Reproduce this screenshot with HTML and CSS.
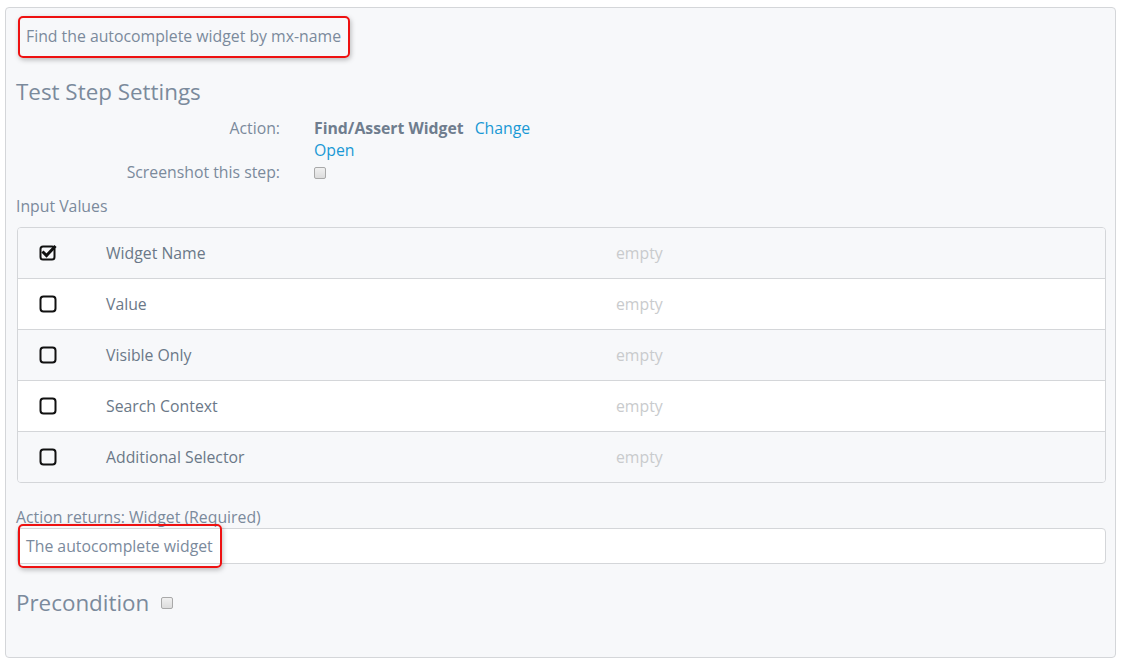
FILE: index.html
```html
<!DOCTYPE html>
<html>
<head>
<meta charset="utf-8">
<link rel="stylesheet" href="styles.css">
</head>
<body>
<div class="panel">
  <div class="note-box">Find the autocomplete widget by mx-name</div>
  <h3 class="heading">Test Step Settings</h3>
  <div class="form-grid">
    <div class="label">Action:</div>
    <div class="value"><span class="strong">Find/Assert Widget</span><a class="link gap">Change</a><br><a class="link">Open</a></div>
    <div class="label">Screenshot this step:</div>
    <div class="value"><span class="cb"></span></div>
  </div>
  <div class="section-label">Input Values</div>
  <div class="table">
    <div class="row alt">
      <div class="icon"><svg width="18" height="18" viewBox="0 0 18 18"><rect x="1.5" y="2.5" width="14" height="13" rx="2.5" fill="none" stroke="#111" stroke-width="2"/><path d="M4.5 8.5 L7.5 11.5 L15.5 3" fill="none" stroke="#111" stroke-width="3" stroke-linecap="square" stroke-linejoin="miter"/></svg></div>
      <div class="name">Widget Name</div>
      <div class="empty">empty</div>
    </div>
    <div class="row">
      <div class="icon"><svg width="18" height="18" viewBox="0 0 18 18"><rect x="1.5" y="1.5" width="15" height="15" rx="3" fill="none" stroke="#111" stroke-width="2"/></svg></div>
      <div class="name">Value</div>
      <div class="empty">empty</div>
    </div>
    <div class="row alt">
      <div class="icon"><svg width="18" height="18" viewBox="0 0 18 18"><rect x="1.5" y="1.5" width="15" height="15" rx="3" fill="none" stroke="#111" stroke-width="2"/></svg></div>
      <div class="name">Visible Only</div>
      <div class="empty">empty</div>
    </div>
    <div class="row">
      <div class="icon"><svg width="18" height="18" viewBox="0 0 18 18"><rect x="1.5" y="1.5" width="15" height="15" rx="3" fill="none" stroke="#111" stroke-width="2"/></svg></div>
      <div class="name">Search Context</div>
      <div class="empty">empty</div>
    </div>
    <div class="row alt">
      <div class="icon"><svg width="18" height="18" viewBox="0 0 18 18"><rect x="1.5" y="1.5" width="15" height="15" rx="3" fill="none" stroke="#111" stroke-width="2"/></svg></div>
      <div class="name">Additional Selector</div>
      <div class="empty">empty</div>
    </div>
  </div>
  <div class="returns-label">Action returns: Widget (Required)</div>
  <div class="input-wrap">
    <div class="input">The autocomplete widget</div>
    <div class="highlight"></div>
  </div>
  <h3 class="heading pre">Precondition <span class="cb"></span></h3>
</div>
</body>
</html>
```

FILE: styles.css
```css
html, body {
  margin: 0;
  padding: 0;
  background: #ffffff;
}
body {
  padding: 7px 6px 0 5px;
  font-family: "Open Sans", "Liberation Sans", sans-serif;
  font-size: 15.8px;
  color: #7b8a9c;
}
.panel {
  height: 651px;
  box-sizing: border-box;
  border: 1px solid #d4d6d9;
  border-radius: 4px;
  background: #f7f8fa;
  padding: 8px 9px 0 10px;
}
.note-box {
  display: inline-block;
  margin-left: 2px;
  border: 2px solid #ee1111;
  border-radius: 5px;
  padding: 0 7px 0 6px;
  line-height: 37px;
  height: 38px;
  box-shadow: 1px 2px 5px rgba(0,0,0,0.25);
  color: #7b8a9c;
}
.heading {
  font-weight: 400;
  font-size: 22.4px;
  line-height: 26px;
  margin: 21px 0 12px 0;
  color: #7b8a9c;
}
.form-grid {
  display: grid;
  grid-template-columns: 264px auto;
  column-gap: 34px;
  line-height: 22px;
}
.label {
  text-align: right;
}
.strong {
  font-weight: 700;
  color: #6f7d8e;
}
.link {
  color: #1a99d5;
}
.gap {
  margin-left: 11px;
}
.cb {
  display: inline-block;
  width: 10px;
  height: 10px;
  border: 1px solid #a9a9a9;
  border-radius: 2px;
  background: linear-gradient(#f0f0f0, #dcdcdc);
  vertical-align: middle;
  position: relative;
  top: -1px;
}
.section-label {
  margin-top: 12px;
  line-height: 22px;
}
.table {
  margin-top: 10px;
  margin-left: 1px;
  border: 1px solid #d4d6d9;
  border-radius: 4px;
  overflow: hidden;
}
.row {
  display: flex;
  align-items: center;
  height: 50px;
  border-top: 1px solid #d4d6d9;
  background: #ffffff;
}
.row:first-child {
  border-top: 0;
}
.row.alt {
  background: #f7f8fa;
}
.icon {
  width: 88px;
  padding-left: 21px;
  box-sizing: border-box;
  display: flex;
  align-items: center;
}
.name {
  width: 510px;
  color: #6b7888;
}
.empty {
  color: #c9cbcd;
}
.returns-label {
  margin-top: 23px;
  line-height: 22px;
}
.input-wrap {
  position: relative;
  margin-left: 1px;
}
.input {
  height: 36px;
  box-sizing: border-box;
  border: 1px solid #d4d6d9;
  border-radius: 4px;
  background: #ffffff;
  line-height: 35px;
  padding-left: 8px;
}
.highlight {
  position: absolute;
  left: 1px;
  top: -4px;
  width: 204px;
  height: 44px;
  box-sizing: border-box;
  border: 2px solid #ee1111;
  border-radius: 5px;
  box-shadow: 1px 2px 5px rgba(0,0,0,0.25);
}
.pre {
  margin-top: 26px;
}
.pre .cb {
  margin-left: 6px;
  top: -2px;
}
```
